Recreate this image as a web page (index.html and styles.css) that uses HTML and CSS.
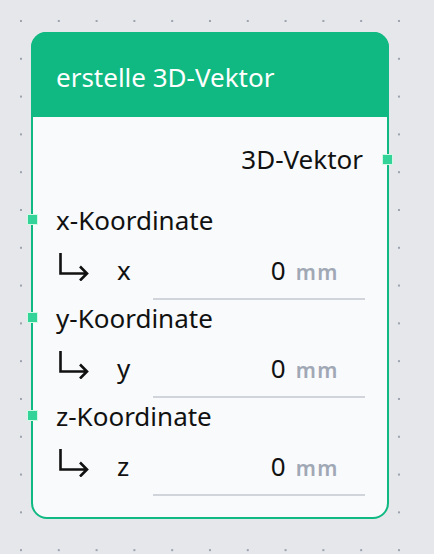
FILE: index.html
```html
<!DOCTYPE html>
<html>
<head>
<meta charset="utf-8">
<link rel="stylesheet" href="styles.css">
</head>
<body>
<div class="node">
  <div class="node-header">erstelle 3D-Vektor</div>
  <div class="node-body">
    <div class="output-row">
      <span>3D-Vektor</span>
      <span class="handle handle-right"></span>
    </div>
    <div class="group">
      <div class="label-row"><span class="handle handle-left"></span>x-Koordinate</div>
      <div class="field-row">
        <svg class="arrow" width="30" height="28" viewBox="0 0 30 28"><path d="M1.5 0 V20.5 H28 M21 13.5 L28 20.5 L21 27.5" fill="none" stroke="#111" stroke-width="2.6"/></svg>
        <span class="var">x</span>
        <div class="field"><span class="value">0</span><span class="unit">mm</span></div>
      </div>
    </div>
    <div class="group">
      <div class="label-row"><span class="handle handle-left"></span>y-Koordinate</div>
      <div class="field-row">
        <svg class="arrow" width="30" height="28" viewBox="0 0 30 28"><path d="M1.5 0 V20.5 H28 M21 13.5 L28 20.5 L21 27.5" fill="none" stroke="#111" stroke-width="2.6"/></svg>
        <span class="var">y</span>
        <div class="field"><span class="value">0</span><span class="unit">mm</span></div>
      </div>
    </div>
    <div class="group">
      <div class="label-row"><span class="handle handle-left"></span>z-Koordinate</div>
      <div class="field-row">
        <svg class="arrow" width="30" height="28" viewBox="0 0 30 28"><path d="M1.5 0 V20.5 H28 M21 13.5 L28 20.5 L21 27.5" fill="none" stroke="#111" stroke-width="2.6"/></svg>
        <span class="var">z</span>
        <div class="field"><span class="value">0</span><span class="unit">mm</span></div>
      </div>
    </div>
  </div>
</div>
</body>
</html>
```
FILE: styles.css
```css
html, body {
  margin: 0;
  padding: 0;
}
body {
  width: 434px;
  height: 554px;
  overflow: hidden;
  background-color: #e5e7eb;
  background-image: radial-gradient(circle, #9ca3af 1.1px, transparent 1.4px);
  background-size: 37.8px 37.8px;
  background-position: 2.1px 2.1px;
  font-family: "Noto Sans", "Open Sans", sans-serif;
  font-size: 26px;
  line-height: 30px;
  color: #111;
}
.node {
  margin: 32px 0 0 31px;
  width: 358px;
  box-sizing: border-box;
  border: 2px solid #10b981;
  border-radius: 16px;
  background: #f8fafc;
}
.node-header {
  background: #10b981;
  color: #fff;
  border-radius: 15px 15px 0 0;
  margin: -2px -2px 0 -2px;
  height: 85px;
  box-sizing: border-box;
  padding: 30px 0 0 25px;
}
.node-body {
  padding: 27px 24px 21px 23px;
}
.output-row {
  position: relative;
  display: flex;
  justify-content: flex-end;
}
.handle {
  position: absolute;
  width: 9px;
  height: 9px;
  background: #34d399;
  border: 1px solid #d1fae5;
}
.handle-right {
  right: -30px;
  top: 9.5px;
}
.handle-left {
  left: -29px;
  top: 8.5px;
}
.group {
  margin-top: 31px;
}
.group + .group {
  margin-top: 3px;
}
.label-row {
  position: relative;
}
.field-row {
  display: flex;
  align-items: flex-start;
  margin-top: 19.5px;
}
.arrow {
  margin-left: 3px;
  margin-top: -2px;
  flex: none;
}
.var {
  margin-left: 28px;
  width: 36px;
}
.field {
  flex: 1;
  display: flex;
  justify-content: flex-end;
  align-items: baseline;
  padding-right: 26px;
  padding-bottom: 13.5px;
  border-bottom: 2px solid #d1d5db;
  margin-right: -2px;
}
.value {
  line-height: 30px;
}
.unit {
  font-size: 21px;
  line-height: 20px;
  font-weight: 600;
  color: #a1a8b5;
  margin-left: 10px;
  letter-spacing: 1.5px;
}
```
